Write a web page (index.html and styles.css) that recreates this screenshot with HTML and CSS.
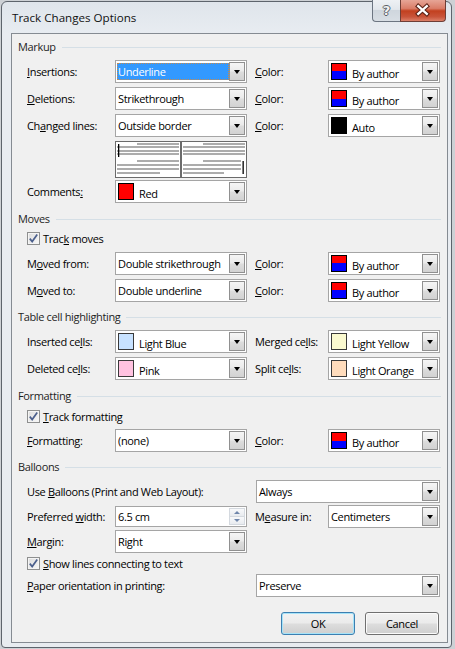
FILE: index.html
```html
<!DOCTYPE html>
<html>
<head>
<meta charset="utf-8">
<title>Track Changes Options</title>
<link rel="stylesheet" href="styles.css">
</head>
<body>
<div class="window">
  <div class="titlebar">
    <span class="title">Track Changes Options</span>
    <div class="capbtns">
      <div class="cap help"><span class="q">?</span></div>
      <div class="cap close">
        <svg width="46" height="21" viewBox="0 0 46 21">
          <path d="M18 6 L27 14 M27 6 L18 14" stroke="#5a2015" stroke-width="4.6" stroke-linecap="square" fill="none"/>
          <path d="M18 6 L27 14 M27 6 L18 14" stroke="#ffffff" stroke-width="2.4" stroke-linecap="square" fill="none"/>
        </svg>
      </div>
    </div>
  </div>
  <div class="client">
    <div class="sec mt5"><span>Markup</span></div>
    <div class="row mt5">
      <span class="lab"><u>I</u>nsertions:</span>
      <div class="combo"><div class="val sel">Underline</div><div class="btn"><i class="arrow"></i></div></div>
      <span class="lab lab2"><u>C</u>olor:</span>
      <div class="combo"><div class="val cval"><i class="sw byauthor"></i><span class="ct">By author</span></div><div class="btn"><i class="arrow"></i></div></div>
    </div>
    <div class="row mt4">
      <span class="lab"><u>D</u>eletions:</span>
      <div class="combo"><div class="val">Strikethrough</div><div class="btn"><i class="arrow"></i></div></div>
      <span class="lab lab2"><u>C</u>olor:</span>
      <div class="combo"><div class="val cval"><i class="sw byauthor"></i><span class="ct">By author</span></div><div class="btn"><i class="arrow"></i></div></div>
    </div>
    <div class="row mt4">
      <span class="lab">Ch<u>a</u>nged lines:</span>
      <div class="combo"><div class="val">Outside border</div><div class="btn"><i class="arrow"></i></div></div>
      <span class="lab lab2"><u>C</u>olor:</span>
      <div class="combo"><div class="val cval"><i class="sw black"></i><span class="ct">Auto</span></div><div class="btn"><i class="arrow"></i></div></div>
    </div>
    <div class="row prevrow mt4">
      <span></span>
      <svg class="preview" width="132" height="37" viewBox="0 0 132 37">
        <rect x="0.5" y="0.5" width="65" height="36" fill="#ffffff" stroke="#6b6b6b"/>
        <rect x="66.5" y="0.5" width="65" height="36" fill="#ffffff" stroke="#6b6b6b"/>
        <g fill="#acacac">
          <rect x="22" y="2" width="42" height="2"/>
          <rect x="2" y="5" width="62" height="2"/>
          <rect x="2" y="9" width="62" height="2"/>
          <rect x="2" y="12" width="62" height="2"/>
          <rect x="22" y="19" width="42" height="2"/>
          <rect x="2" y="23" width="62" height="2"/>
          <rect x="2" y="27" width="62" height="2"/>
          <rect x="2" y="31" width="43" height="2"/>
          <rect x="88" y="2" width="42" height="2"/>
          <rect x="68" y="5" width="62" height="2"/>
          <rect x="68" y="9" width="62" height="2"/>
          <rect x="68" y="12" width="62" height="2"/>
          <rect x="88" y="19" width="38" height="2"/>
          <rect x="68" y="23" width="58" height="2"/>
          <rect x="68" y="27" width="58" height="2"/>
          <rect x="68" y="31" width="41" height="2"/>
        </g>
        <rect x="3" y="3" width="1.3" height="13" fill="#000000"/>
        <rect x="127.5" y="20" width="1.3" height="13" fill="#000000"/>
      </svg>
    </div>
    <div class="row mt2">
      <span class="lab">Comments<u>:</u></span>
      <div class="combo"><div class="val cval"><i class="sw red"></i><span class="ct">Red</span></div><div class="btn"><i class="arrow"></i></div></div>
    </div>
    <div class="sec mt8"><span>Moves</span></div>
    <div class="chkrow mt3">
      <span class="chk"><svg width="11" height="11" viewBox="0 0 11 11"><path d="M1.8 5.6 L4.2 8.6 L9.2 1.6" stroke="#4b5f8c" stroke-width="1.7" fill="none"/></svg></span>
      <span>Trac<u>k</u> moves</span>
    </div>
    <div class="row mt5">
      <span class="lab">M<u>o</u>ved from:</span>
      <div class="combo"><div class="val">Double strikethrough</div><div class="btn"><i class="arrow"></i></div></div>
      <span class="lab lab2"><u>C</u>olor:</span>
      <div class="combo"><div class="val cval"><i class="sw byauthor"></i><span class="ct">By author</span></div><div class="btn"><i class="arrow"></i></div></div>
    </div>
    <div class="row mt4">
      <span class="lab">M<u>o</u>ved to:</span>
      <div class="combo"><div class="val">Double underline</div><div class="btn"><i class="arrow"></i></div></div>
      <span class="lab lab2"><u>C</u>olor:</span>
      <div class="combo"><div class="val cval"><i class="sw byauthor"></i><span class="ct">By author</span></div><div class="btn"><i class="arrow"></i></div></div>
    </div>
    <div class="sec mt7"><span>Table cell highlighting</span></div>
    <div class="row mt5">
      <span class="lab">Inserted ce<u>l</u>ls:</span>
      <div class="combo"><div class="val cval"><i class="sw lblue"></i><span class="ct">Light Blue</span></div><div class="btn"><i class="arrow"></i></div></div>
      <span class="lab lab2">Merged ce<u>l</u>ls:</span>
      <div class="combo"><div class="val cval"><i class="sw lyellow"></i><span class="ct">Light Yellow</span></div><div class="btn"><i class="arrow"></i></div></div>
    </div>
    <div class="row mt4">
      <span class="lab">Deleted ce<u>l</u>ls:</span>
      <div class="combo"><div class="val cval"><i class="sw pink"></i><span class="ct">Pink</span></div><div class="btn"><i class="arrow"></i></div></div>
      <span class="lab lab2">Split ce<u>l</u>ls:</span>
      <div class="combo"><div class="val cval"><i class="sw lorange"></i><span class="ct">Light Orange</span></div><div class="btn"><i class="arrow"></i></div></div>
    </div>
    <div class="sec mt8"><span>Formatting</span></div>
    <div class="chkrow mt4">
      <span class="chk"><svg width="11" height="11" viewBox="0 0 11 11"><path d="M1.8 5.6 L4.2 8.6 L9.2 1.6" stroke="#4b5f8c" stroke-width="1.7" fill="none"/></svg></span>
      <span><u>T</u>rack formatting</span>
    </div>
    <div class="row mt4">
      <span class="lab"><u>F</u>ormatting:</span>
      <div class="combo"><div class="val">(none)</div><div class="btn"><i class="arrow"></i></div></div>
      <span class="lab lab2"><u>C</u>olor:</span>
      <div class="combo"><div class="val cval"><i class="sw byauthor"></i><span class="ct">By author</span></div><div class="btn"><i class="arrow"></i></div></div>
    </div>
    <div class="sec mt7"><span>Balloons</span></div>
    <div class="row wide mt5">
      <span class="lab">Use <u>B</u>alloons (Print and Web Layout):</span>
      <div class="combo"><div class="val">Always</div><div class="btn"><i class="arrow"></i></div></div>
    </div>
    <div class="row mt2">
      <span class="lab">Preferred <u>w</u>idth:</span>
      <div class="spin"><div class="val">6.5 cm</div><div class="spinbtns"><div class="sb"><i class="up"></i></div><div class="sb"><i class="down"></i></div></div></div>
      <span class="lab lab2">M<u>e</u>asure in:</span>
      <div class="combo"><div class="val">Centimeters</div><div class="btn"><i class="arrow"></i></div></div>
    </div>
    <div class="row mt2">
      <span class="lab"><u>M</u>argin:</span>
      <div class="combo"><div class="val">Right</div><div class="btn"><i class="arrow"></i></div></div>
    </div>
    <div class="chkrow mt2">
      <span class="chk"><svg width="11" height="11" viewBox="0 0 11 11"><path d="M1.8 5.6 L4.2 8.6 L9.2 1.6" stroke="#4b5f8c" stroke-width="1.7" fill="none"/></svg></span>
      <span><u>S</u>how lines connecting to text</span>
    </div>
    <div class="row wide mt2">
      <span class="lab"><u>P</u>aper orientation in printing:</span>
      <div class="combo"><div class="val">Preserve</div><div class="btn"><i class="arrow"></i></div></div>
    </div>
    <div class="actions mt15">
      <div class="pbtn default">OK</div>
      <div class="pbtn">Cancel</div>
    </div>
  </div>
</div>
</body>
</html>
```
FILE: styles.css
```css
* { box-sizing: border-box; }
html, body { margin: 0; padding: 0; }
body {
  width: 455px;
  height: 649px;
  overflow: hidden;
  background: #cdd1d5;
  font-family: "Open Sans", "Noto Sans", sans-serif;
  font-size: 11px;
  letter-spacing: -0.35px;
  color: #000;
}
u { text-decoration: underline; text-underline-offset: 1px; }
i { font-style: normal; }

.window {
  margin: 1px 0 0 1px;
  width: 451px;
  height: 647px;
  border: 1px solid #5d646c;
  border-radius: 6px 6px 4px 4px;
  background: linear-gradient(#dfe5eb 0, #e8ecf1 32px, #e8ecf0 100%);
  padding: 0 3px 4px 9px;
  display: flex;
  flex-direction: column;
}
.titlebar {
  height: 31px;
  flex: none;
  display: flex;
  justify-content: space-between;
  align-items: flex-start;
}
.title {
  margin: 8px 0 0 1px;
  line-height: 16px;
  font-size: 11.6px;
  letter-spacing: 0;
  color: #111;
}
.capbtns {
  display: flex;
  margin: -2px 2px 0 0;
}
.cap { height: 22px; display: flex; align-items: center; justify-content: center; }
.help {
  width: 28px;
  border: 1px solid #6c7581;
  border-top: none;
  border-right: none;
  border-radius: 0 0 0 4px;
  background: linear-gradient(#eef1f4 0, #e2e7ec 45%, #cfd6dd 50%, #d8dee4 100%);
}
.q {
  font-family: "DejaVu Sans", sans-serif;
  font-weight: bold;
  font-size: 13px;
  line-height: 20px;
  letter-spacing: 0;
  color: #f3f3f3;
  text-shadow: -1px 0 #5a5f66, 1px 0 #5a5f66, 0 -1px #5a5f66, 0 1px #5a5f66;
}
.close {
  width: 46px;
  border: 1px solid #6e3e36;
  border-top: none;
  border-radius: 0 0 4px 0;
  background: linear-gradient(#e6a596 0, #da7d68 40%, #c2401f 52%, #c9543a 80%, #dc8068 100%);
}
.close svg { display: block; }

.client {
  width: 437px;
  height: 610px;
  flex: none;
  border: 1px solid #858b92;
  background: #f0f0f0;
  display: flex;
  flex-direction: column;
}
.mt2 { margin-top: 2px; }
.mt3 { margin-top: 3px; }
.mt4 { margin-top: 4px; }
.mt5 { margin-top: 5px; }
.mt7 { margin-top: 7px; }
.mt8 { margin-top: 8px; }
.mt15 { margin-top: 15px; }

.sec {
  height: 16px;
  flex: none;
  display: flex;
  align-items: center;
  padding: 0 6px;
  color: #1e1e1e;
  line-height: 16px;
  white-space: nowrap;
}
.sec::after {
  content: "";
  flex: 1;
  height: 1px;
  margin-left: 6px;
  background: #d5dfe6;
}

.row {
  height: 23px;
  flex: none;
  display: grid;
  grid-template-columns: 88px 132px 81px 112px;
  align-items: center;
  padding-left: 15px;
}
.row.wide { grid-template-columns: 229px 184px; }
.prevrow { height: 37px; }
.preview { display: block; }
.lab { white-space: nowrap; line-height: 16px; }
.lab2 { padding-left: 8px; }

.combo, .spin {
  height: 23px;
  border: 1px solid #a5a5a5;
  background: #fff;
  padding: 1px;
  display: flex;
}
.spin { height: 21px; }
.val {
  flex: 1;
  min-width: 0;
  display: flex;
  align-items: center;
  padding-left: 1px;
  white-space: nowrap;
  overflow: hidden;
}
.val.sel {
  margin: 1px 0;
  background: #3399ff;
  color: #fff;
  border: 1px dotted #c98a4b;
  padding-left: 0;
}
.btn {
  width: 16px;
  flex: none;
  border: 1px solid #909090;
  background: linear-gradient(#f5f5f5 0, #ebebeb 45%, #dcdcdc 55%, #d2d2d2 100%);
  display: flex;
  align-items: center;
  justify-content: center;
}
.arrow {
  width: 0;
  height: 0;
  border-left: 3.5px solid transparent;
  border-right: 3.5px solid transparent;
  border-top: 4px solid #000;
  margin-top: 1px;
}
.cval { align-items: flex-end; padding-left: 1px; }
.sw {
  align-self: flex-start;
  width: 16px;
  height: 17px;
  margin: 1px 5px 0 0;
  border: 1px solid #000;
  flex: none;
}
.ct { line-height: 14px; }
.byauthor { background: linear-gradient(#ff0000 50%, #0000ff 50%); }
.black { background: #000; }
.red { background: #ff0000; }
.lblue { background: #c8e2ff; border-color: #3a3a3a; }
.lyellow { background: #fbfad0; border-color: #3a3a3a; }
.pink { background: #ffc2e0; border-color: #3a3a3a; }
.lorange { background: #ffdcbc; border-color: #3a3a3a; }

.spinbtns {
  width: 16px;
  flex: none;
  display: flex;
  flex-direction: column;
}
.sb {
  flex: 1;
  display: flex;
  align-items: center;
  justify-content: center;
  background: linear-gradient(#f8f9fb, #e8ebef);
  border: 1px solid #d4d9df;
}
.sb + .sb { border-top: none; }
.up, .down {
  width: 0;
  height: 0;
  border-left: 3px solid transparent;
  border-right: 3px solid transparent;
}
.up { border-bottom: 3px solid #6f86ab; }
.down { border-top: 3px solid #6f86ab; }

.chkrow {
  height: 17px;
  flex: none;
  display: flex;
  align-items: center;
  gap: 3px;
  padding-left: 15px;
  line-height: 16px;
  white-space: nowrap;
}
.chk {
  width: 13px;
  height: 13px;
  flex: none;
  border: 1px solid #8e8f8f;
  background: linear-gradient(135deg, #dcdcdc, #f8f8f8);
  display: flex;
  align-items: center;
  justify-content: center;
  box-shadow: inset 0 0 0 1px #f4f4f4;
}
.chk svg { display: block; }

.actions {
  height: 23px;
  flex: none;
  display: flex;
  justify-content: flex-end;
  gap: 10px;
  padding-right: 8px;
}
.pbtn {
  width: 74px;
  height: 23px;
  border: 1px solid #707070;
  border-radius: 3px;
  background: linear-gradient(#f2f2f2 0, #ebebeb 48%, #dddddd 52%, #cfcfcf 100%);
  box-shadow: inset 0 0 0 1px #fbfbfb;
  display: flex;
  align-items: center;
  justify-content: center;
}
.pbtn.default {
  border-color: #3c7fb1;
  box-shadow: inset 0 0 0 1px #a6e3f8;
}
```
